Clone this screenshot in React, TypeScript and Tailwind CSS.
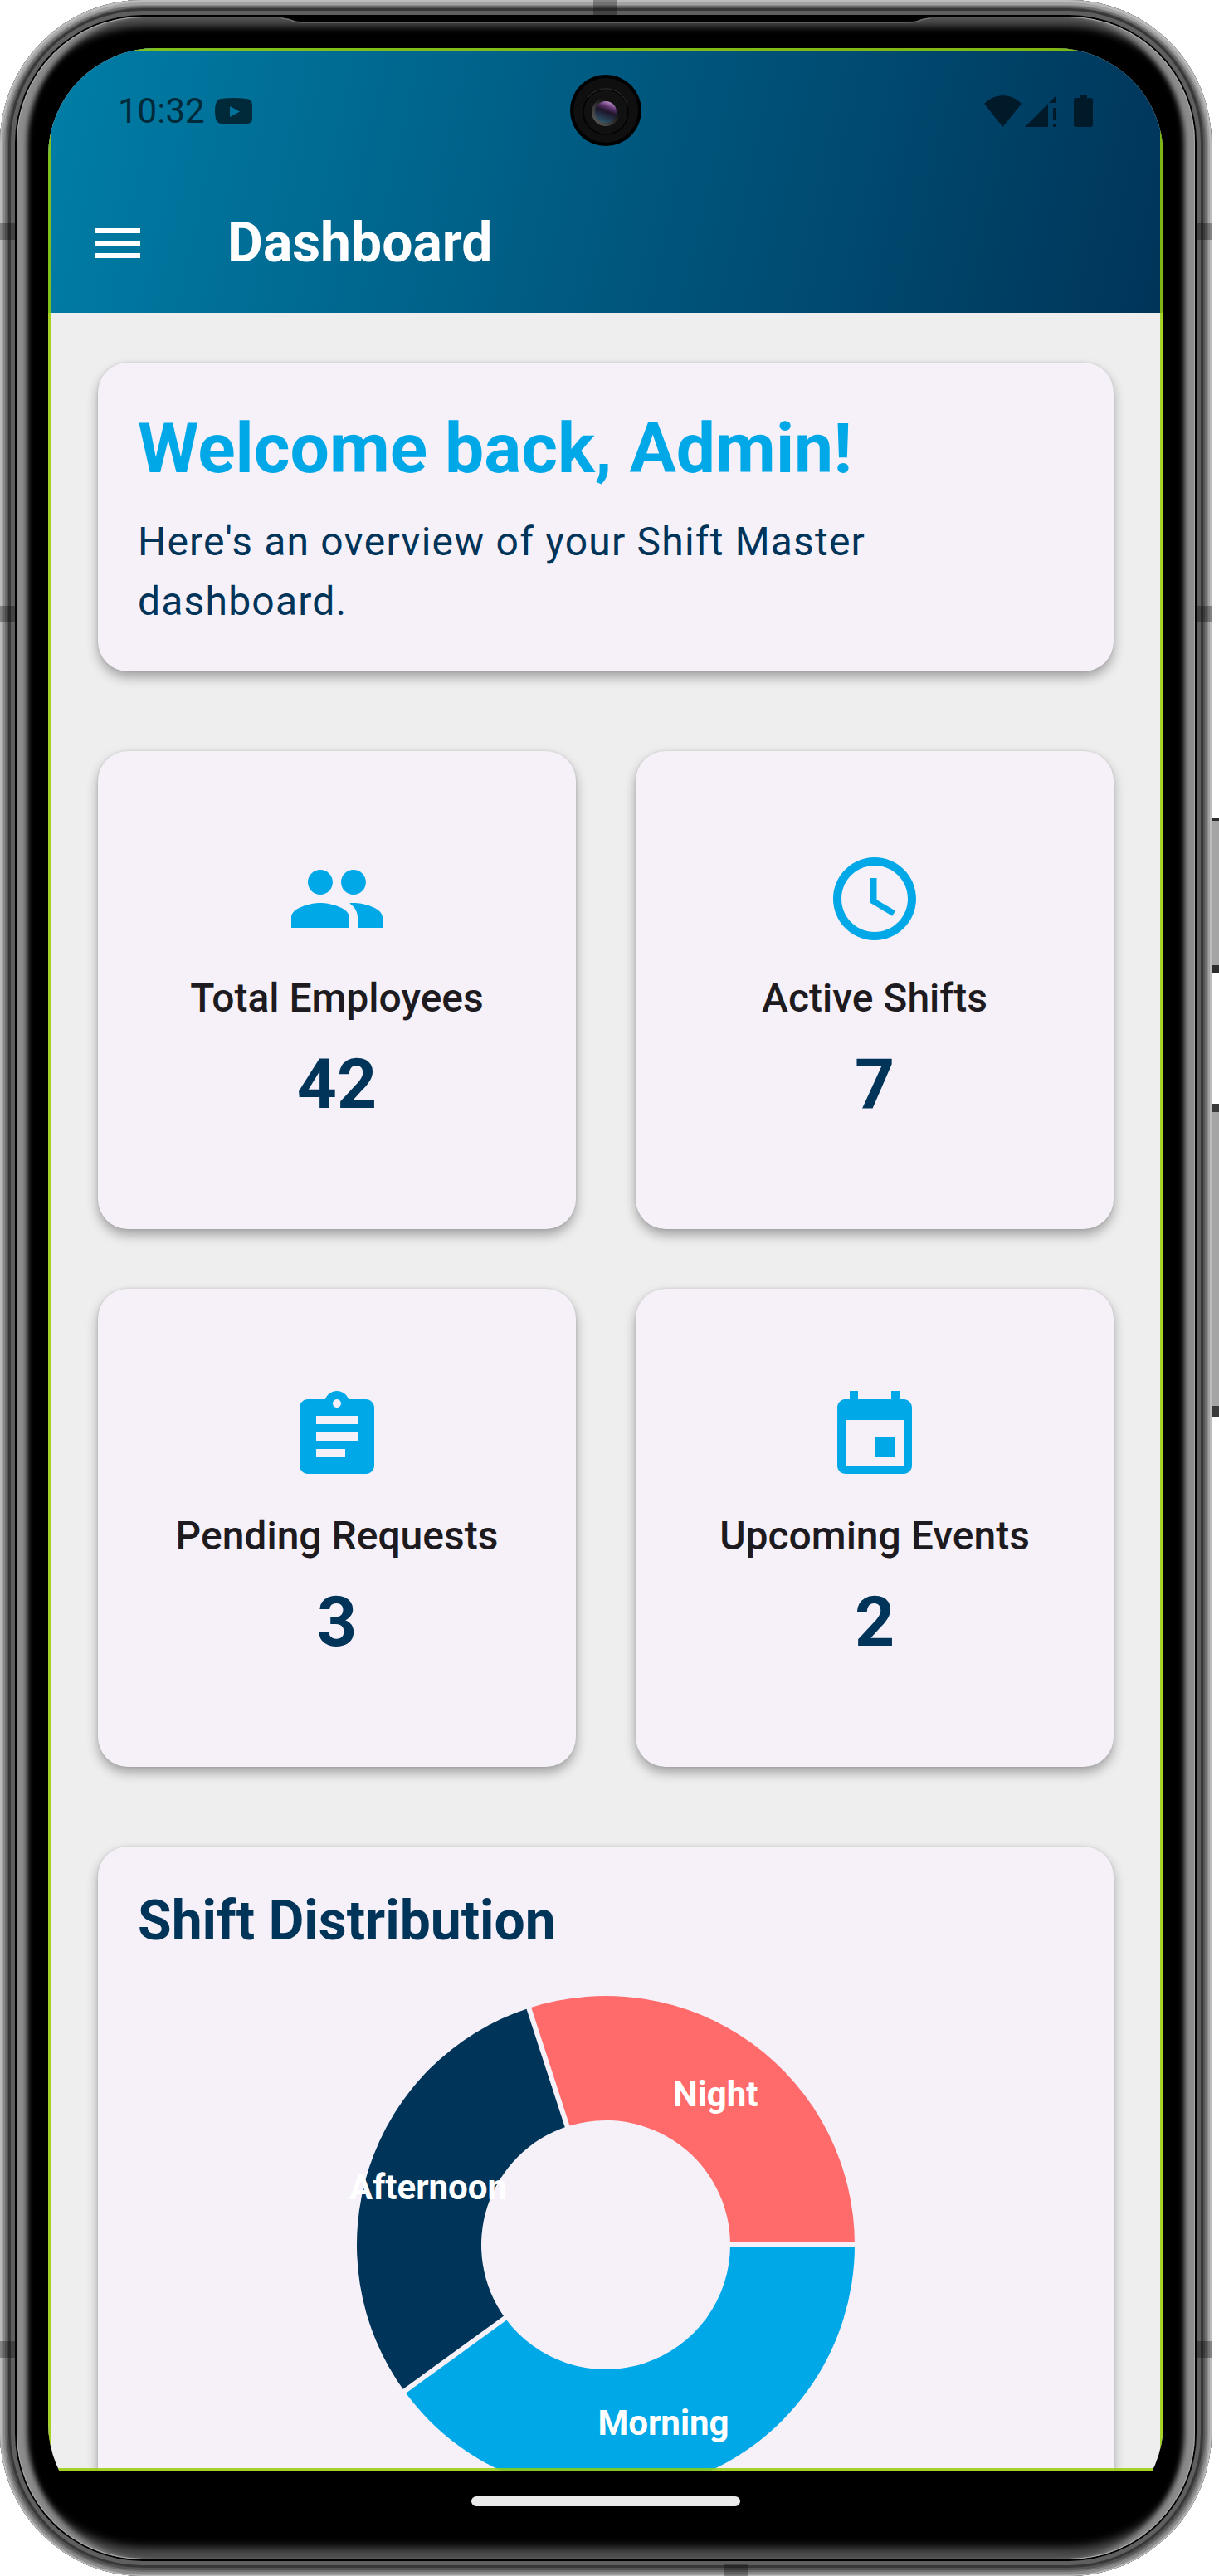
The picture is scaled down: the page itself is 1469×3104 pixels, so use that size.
import React from "react";
import { MdAccessTime, MdAssignment, MdMenu, MdPeople } from "react-icons/md";

function EventIcon() {
  return (
    <svg viewBox="0 0 24 24" fill="currentColor" className="size-[120px]" aria-hidden="true">
      <path d="M17 12h-5v5h5v-5zM16 1v2H8V1H6v2H5c-1.11 0-1.99.9-1.99 2L3 19c0 1.1.89 2 2 2h14c1.1 0 2-.9 2-2V5c0-1.1-.9-2-2-2h-1V1h-2zm3 18H5V8h14v11z" />
    </svg>
  );
}

const stats = [
  { label: "Total Employees", value: 42, icon: <MdPeople className="size-[120px]" /> },
  { label: "Active Shifts", value: 7, icon: <MdAccessTime className="size-[120px]" /> },
  { label: "Pending Requests", value: 3, icon: <MdAssignment className="size-[120px]" /> },
  { label: "Upcoming Events", value: 2, icon: <EventIcon /> },
];

const shifts = [
  { name: "Morning", share: 40, color: "#00A8E8" },
  { name: "Afternoon", share: 30, color: "#003459" },
  { name: "Night", share: 30, color: "#FF6B6B" },
];

function point(radius: number, share: number) {
  const angle = (share / 100) * Math.PI * 2;
  return [300 + radius * Math.cos(angle), 300 + radius * Math.sin(angle)];
}

function ShiftChart() {
  let total = 0;
  const slices = shifts.map((shift) => {
    const start = total;
    total += shift.share;
    return { ...shift, start, end: total };
  });
  return (
    <svg viewBox="0 0 600 600" className="size-[600px] overflow-visible" role="img" aria-label="Shift distribution chart">
      {slices.map(({ name, start, end, color }) => {
        const [ax, ay] = point(300, start);
        const [bx, by] = point(300, end);
        const [cx, cy] = point(150, end);
        const [dx, dy] = point(150, start);
        return (
          <path
            key={name}
            fill={color}
            d={`M${ax} ${ay}A300 300 0 0 1 ${bx} ${by}L${cx} ${cy}A150 150 0 0 0 ${dx} ${dy}Z`}
          />
        );
      })}
      {slices.map(({ name, start }) => {
        const [ax, ay] = point(140, start);
        const [bx, by] = point(310, start);
        return <line key={name} x1={ax} y1={ay} x2={bx} y2={by} stroke="#F6F1F9" strokeWidth="6" />;
      })}
      {slices.map(({ name, start, end }) => {
        const [x, y] = point(225, (start + end) / 2);
        return (
          <text key={name} x={x} y={y + 15} textAnchor="middle" fill="#fff" className="text-[42px] font-bold">
            {name}
          </text>
        );
      })}
    </svg>
  );
}

function Card({ className, children }: { className: string; children: React.ReactNode }) {
  return (
    <section
      className={`rounded-[36px] bg-[#F6F1F9] shadow-[0_7px_14px_rgba(0,0,0,0.32),0_0_3px_rgba(0,0,0,0.12)] ${className}`}
    >
      {children}
    </section>
  );
}

function StatusBar() {
  return (
    <div className="flex h-[151px] items-center justify-between px-[84px] text-[#002A3A]">
      <div className="flex items-center gap-[12px]">
        <span className="text-[42px] leading-[48px]">10:32</span>
        <svg viewBox="0 0 45 32" className="h-[32px] w-[45px]" aria-hidden="true">
          <path
            fill="currentColor"
            fillRule="evenodd"
            d="M7 1Q22-1 38 1Q45 2 45 8V25Q45 31 38 31Q22 33 7 31Q0 30 0 16Q0 2 7 1ZM18 10V23L30 16.500Z"
          />
        </svg>
      </div>
      <svg viewBox="0 0 132 40" className="h-[40px] w-[132px] text-[#001A29]" fill="currentColor" aria-hidden="true">
        <path d="M0 11Q10 1 22.500 1T45 11L22.500 39Z" />
        <path d="M49 39L77 11V39ZM78 10L87 1V10ZM83 16H87V31H83ZM83 35H87V39H83Z" />
        <path d="M115 0H124V4H128Q131 4 131 7V36Q131 39 128 39H111Q108 39 108 36V7Q108 4 111 4H115Z" />
      </svg>
    </div>
  );
}

function Camera() {
  return (
    <svg viewBox="0 0 86 86" className="absolute top-[32px] left-1/2 size-[86px] -translate-x-1/2" aria-hidden="true">
      <defs>
        <linearGradient id="lens" x1="0.8" y1="0" x2="0.4" y2="1">
          <stop offset="0" stopColor="#d9a8ea" />
          <stop offset="0.3" stopColor="#5a3269" />
          <stop offset="0.5" stopColor="#1d1428" />
          <stop offset="1" stopColor="#2c5468" />
        </linearGradient>
        <linearGradient id="rim" x1="1" y1="0" x2="0" y2="1">
          <stop offset="0.3" stopColor="#111" />
          <stop offset="1" stopColor="#666" />
        </linearGradient>
      </defs>
      <circle cx="43" cy="43" r="43" fill="#000" />
      <circle cx="43" cy="43" r="39" fill="#0f0f0f" />
      <circle cx="43" cy="45" r="27" fill="#111" stroke="#020202" strokeWidth="1.500" />
      <path d="M22 27A27 27 0 0 1 69 36" fill="none" stroke="#333" />
      <circle cx="43" cy="45" r="17" fill="url(#rim)" />
      <circle cx="43" cy="45" r="13" fill="url(#lens)" />
    </svg>
  );
}

function Speaker() {
  return (
    <svg viewBox="0 0 782 8" className="absolute top-[20px] left-1/2 h-[8px] w-[782px] -translate-x-1/2" aria-hidden="true">
      <path d="M0 0H782V1Q772 2 766 5Q762 6 756 6H26Q20 6 16 5Q10 2 0 1Z" fill="#000" />
      <path d="M0 2Q10 3 16 6Q20 7 26 7H756Q762 7 766 6Q772 3 782 2" fill="none" stroke="#7a7a7a" />
    </svg>
  );
}

export default function App() {
  return (
    <div className="h-screen overflow-hidden bg-white pr-[9px] font-['Roboto',sans-serif]">
      <div className="relative h-full rounded-[172px] bg-black p-[20px] shadow-[inset_0_1px_0_2px_#bcbcbc,inset_0_2px_0_4px_#a2a2a2,inset_0_1px_0_6px_#8a8a8a,inset_0_1px_0_8px_#6e6e6e,inset_0_0_0_10px_#545454,inset_0_0_0_13px_#383838,inset_0_0_0_18px_#5f5f5f]">
        <div className="absolute top-[986px] -right-[9px] h-[187px] w-[9px] border-t-[3px] border-b-[10px] border-[#2d2d2d] bg-[#a4a4a4]" />
        <div className="absolute top-[1330px] -right-[9px] h-[378px] w-[9px] border-t-[10px] border-b-[14px] border-[#3a3a3a] bg-[#a4a4a4]" />
        <div className="absolute top-0 left-[715px] h-[19px] w-[29px] bg-black/30" />
        <div className="absolute top-[269px] left-0 h-[20px] w-[18px] bg-black/30" />
        <div className="absolute top-[730px] left-0 h-[20px] w-[18px] bg-black/30" />
        <div className="absolute bottom-[263px] left-0 h-[20px] w-[18px] bg-black/30" />
        <div className="absolute top-[269px] right-0 h-[20px] w-[18px] bg-black/30" />
        <div className="absolute top-[730px] right-0 h-[20px] w-[18px] bg-black/30" />
        <div className="absolute right-0 bottom-[263px] h-[20px] w-[18px] bg-black/30" />
        <div className="absolute bottom-0 left-[873px] h-[14px] w-[29px] bg-black/30" />
        <div className="h-full rounded-[152px] bg-black px-[38px] pt-[38px] pb-[34px] shadow-[inset_0_0_0_1px_#a8a8a8,inset_16px_0_6px_-3px_#8c8c8c,inset_-16px_0_6px_-3px_#8c8c8c,inset_0_16px_10px_-4px_#4e4e4e,inset_0_-18px_12px_-4px_#505050]">
          <div className="relative flex h-full flex-col overflow-hidden rounded-[130px] bg-black">
            <div className="relative min-h-0 flex-1 overflow-hidden bg-[#EEEEEE]">
              <header className="bg-[linear-gradient(103deg,#007EA7,#003459)]">
                <StatusBar />
                <div className="flex h-[168px] items-center text-white">
                  <button type="button" aria-label="Open menu" className="flex w-[168px] justify-center">
                    <MdMenu className="size-[72px]" />
                  </button>
                  <h1 className="ml-[48px] text-[66px] leading-[84px] font-bold">Dashboard</h1>
                </div>
              </header>
              <main className="p-[60px]">
                <Card className="p-[48px]">
                  <h2 className="text-[84px] leading-[112px] font-bold text-[#00A8E8]">Welcome back, Admin!</h2>
                  <p className="mt-[20px] text-[48px] leading-[72px] tracking-wide text-[#003459]">
                    Here's an overview of your Shift Master dashboard.
                  </p>
                </Card>
                <div className="mt-[96px] grid grid-cols-2 gap-[72px]">
                  {stats.map(({ label, value, icon }) => (
                    <Card key={label} className="flex aspect-square flex-col items-center justify-center">
                      <div className="text-[#00A8E8]">{icon}</div>
                      <h3 className="mt-[24px] text-[48px] leading-[72px] font-medium text-[#1D1B20]">{label}</h3>
                      <p className="mt-[12px] text-[84px] leading-[112px] font-bold text-[#003459]">{value}</p>
                    </Card>
                  ))}
                </div>
                <Card className="mt-[96px] p-[48px]">
                  <h2 className="text-[66px] leading-[84px] font-bold text-[#003459]">Shift Distribution</h2>
                  <div className="mt-[48px] flex justify-center">
                    <ShiftChart />
                  </div>
                </Card>
              </main>
              <div className="pointer-events-none absolute inset-0 border-4 border-[#96CD06]/85" />
            </div>
            <div className="flex h-[72px] shrink-0 justify-center pt-[30px]">
              <div className="h-[12px] w-[324px] rounded-full bg-[#EBEBEB]" />
            </div>
            <Camera />
          </div>
        </div>
        <Speaker />
      </div>
    </div>
  );
}
